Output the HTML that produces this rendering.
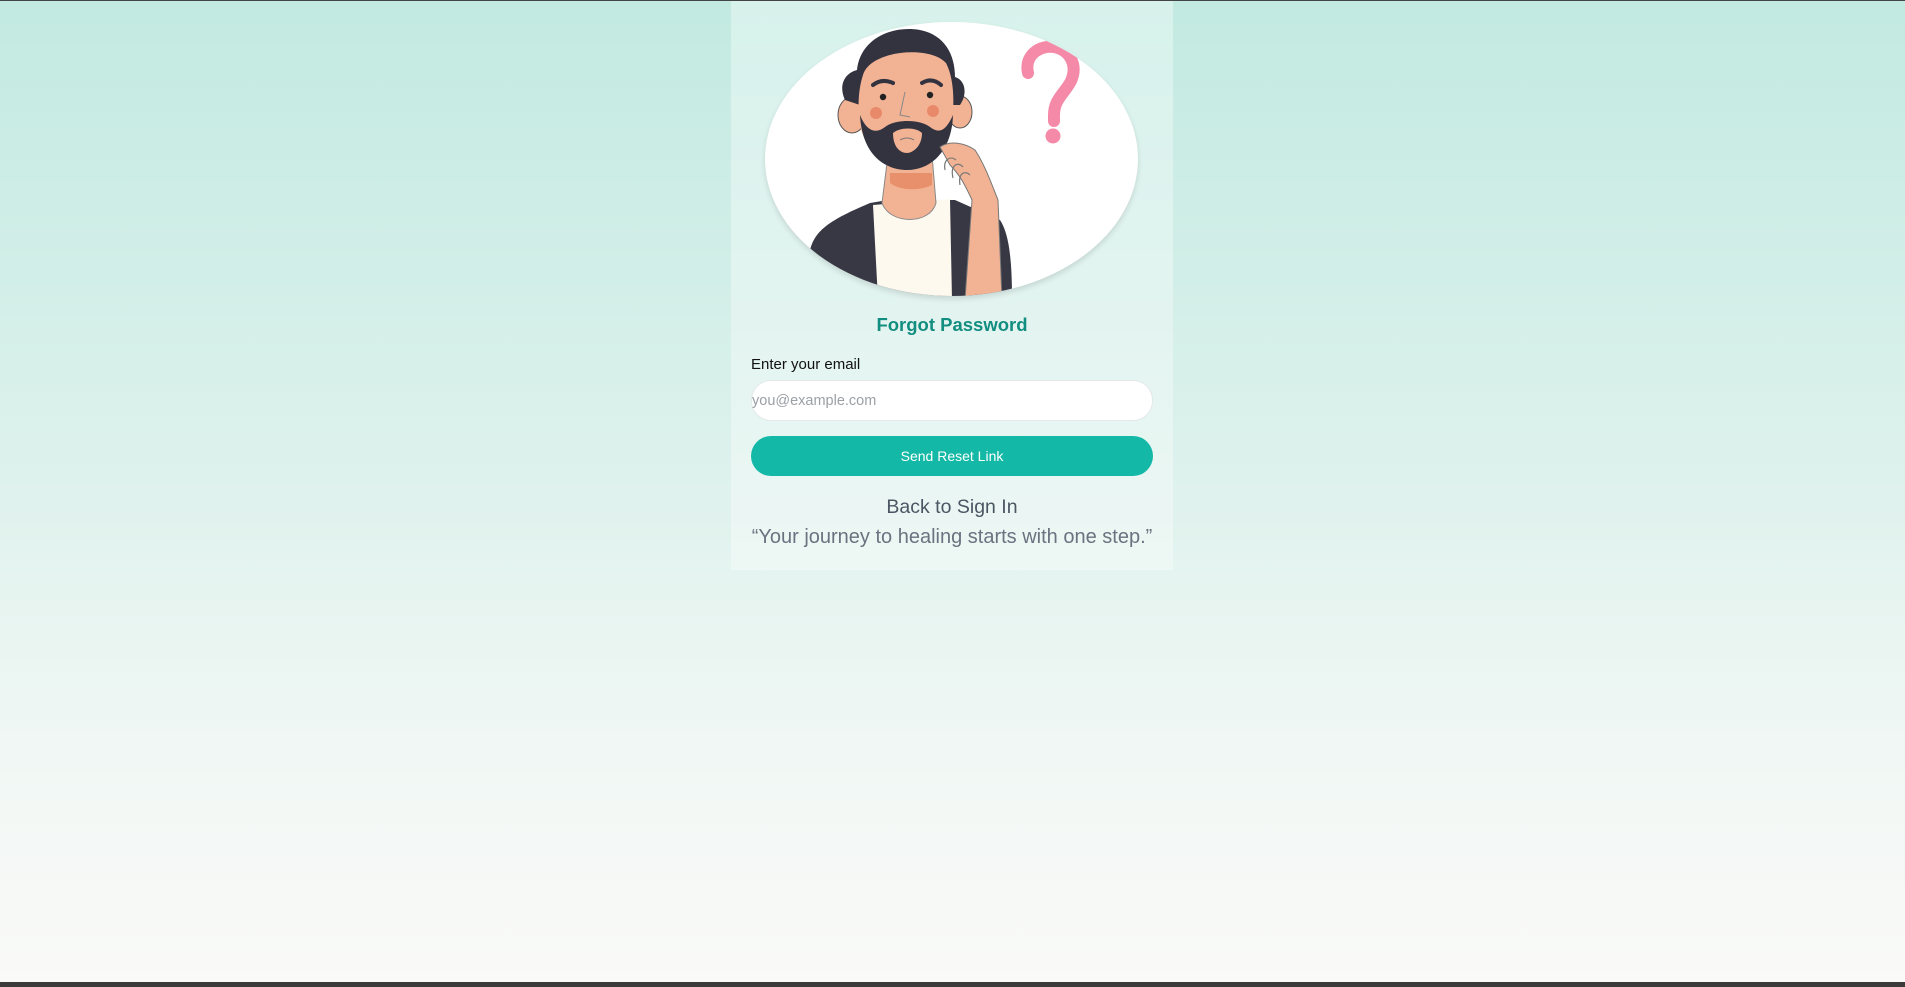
<!DOCTYPE html>
<html><head><meta charset="utf-8"><style>
html,body{margin:0;padding:0}
body{width:1905px;height:987px;position:relative;overflow:hidden;background:linear-gradient(#c2eae1 0%,#dcf1ec 45%,#f0f7f4 75%,#fafaf8 100%);font-family:"Liberation Sans",sans-serif}
.topbar{position:absolute;left:0;top:0;width:1905px;height:1px;background:#444}
.botbar{position:absolute;left:0;top:982px;width:1905px;height:5px;background:#3a3a3a}
.card{position:absolute;left:731px;top:1px;width:442px;height:569px;background:rgba(255,255,255,0.35)}
.oval{position:absolute;left:765px;top:22px;width:373px;height:274px;border-radius:50%;background:#fff;box-shadow:0 3px 6px rgba(0,0,0,0.12);overflow:hidden}
.t{position:absolute;left:731px;width:442px;text-align:center;white-space:nowrap}
</style></head><body>
<div class="topbar"></div>
<div class="card"></div>
<div class="oval">
<svg width="373" height="274" viewBox="5 7 373 274" xmlns="http://www.w3.org/2000/svg">
<path d="M268 58 C264 40 280 30 294 32 C310 35 318 50 311 66 C305 78 294 84 294 100 L294 106" fill="none" stroke="#f48aa8" stroke-width="12" stroke-linecap="round"/>
<circle cx="293" cy="121" r="7.5" fill="#f48aa8"/>
<path d="M48 285 L50 235 C55 215 70 205 110 188 L128 185 L195 185 L240 205 C250 220 252 250 252 285 Z" fill="#383844"/>
<path d="M113 190 L190 184 L192 285 L118 285 Z" fill="#fdf9ef"/>
<path d="M128 140 L172 140 L176 188 C170 210 130 210 122 188 Z" fill="#f2b294" stroke="#888" stroke-width="1"/>
<path d="M130 158 L172 158 L172 170 C160 176 140 176 130 168 Z" fill="#e8906b"/>
<ellipse cx="92" cy="100" rx="14" ry="18" fill="#f2b294" stroke="#555" stroke-width="1"/>
<ellipse cx="200" cy="97" rx="12" ry="16" fill="#f2b294" stroke="#555" stroke-width="1"/>
<path d="M85 85 C78 70 85 58 97 55 C100 25 130 10 160 15 C185 20 195 40 195 62 C205 65 208 78 200 90 L190 90 L100 90 Z" fill="#333340"/>
<path d="M103 60 C110 35 170 30 186 48 C195 65 195 95 190 115 C180 140 160 150 145 150 C125 150 105 135 100 110 C97 90 99 72 103 60 Z" fill="#f2b294"/>
<path d="M100 100 C102 140 125 155 147 155 C172 155 192 135 193 100 C185 118 178 118 170 112 C160 104 135 104 125 112 C115 120 106 115 100 100 Z" fill="#333340"/>
<path d="M133 118 C140 112 156 112 162 118 C162 132 152 138 147 138 C140 138 133 132 133 118 Z" fill="#f2b294"/>
<path d="M140 125 Q147 121 154 125" stroke="#777" fill="none" stroke-width="1"/>
<path d="M113 70 Q122 63 133 68" stroke="#333340" stroke-width="4" fill="none" stroke-linecap="round"/>
<path d="M162 68 Q172 62 181 70" stroke="#333340" stroke-width="4" fill="none" stroke-linecap="round"/>
<circle cx="123" cy="82" r="3.2" fill="#222"/>
<circle cx="170" cy="80" r="3.2" fill="#222"/>
<circle cx="116" cy="98" r="6" fill="#e88a6a"/>
<circle cx="173" cy="96" r="6" fill="#e88a6a"/>
<path d="M145 77 L140 100 L150 102" stroke="#888" fill="none" stroke-width="1"/>
<path d="M205 285 L212 185 C205 170 200 160 190 150 L180 132 C190 125 205 128 215 135 C225 150 232 170 238 185 L242 285 Z" fill="#f2b294" stroke="#777" stroke-width="1"/>
<path d="M185 155 C183 145 190 140 196 145 M193 163 C190 150 198 146 203 152 M200 170 C198 158 205 155 210 160" stroke="#777" fill="none" stroke-width="1.2"/>
</svg>
</div>
<div class="t" style="top:312px;font-size:18.5px;font-weight:bold;color:#128e80;line-height:26px">Forgot Password</div>
<div style="position:absolute;left:751px;top:356px;font-size:15px;color:#111;line-height:18px">Enter your email</div>
<div style="position:absolute;left:751px;top:380px;width:400px;height:39px;border:1px solid #e3e9e8;border-radius:20px;background:#fff;box-sizing:content-box"></div>
<div style="position:absolute;left:752px;top:392px;font-size:14.5px;color:#9aa0a6;line-height:18px">you@example.com</div>
<div style="position:absolute;left:751px;top:436px;width:402px;height:40px;border-radius:20px;background:#14b8a6;color:#fff;font-size:14px;text-align:center;line-height:41px">Send Reset Link</div>
<div class="t" style="top:494px;font-size:19.5px;color:#4b5563;line-height:26px">Back to Sign In</div>
<div class="t" style="top:524px;font-size:20px;color:#6b7280;line-height:26px">“Your journey to healing starts with one step.”</div>
<div class="botbar"></div>
</body></html>
